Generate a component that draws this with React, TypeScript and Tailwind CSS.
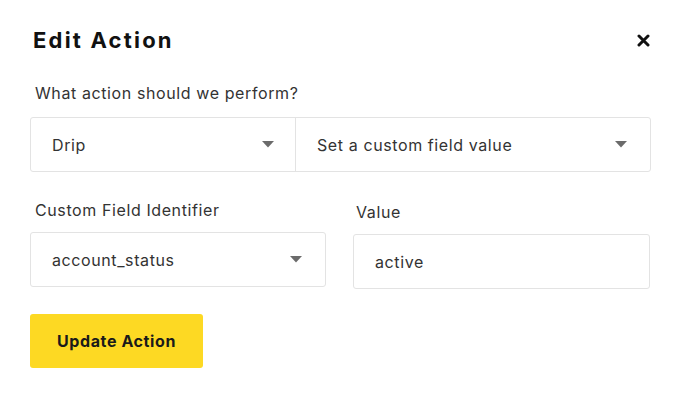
import React from "react";

function Caret() {
  return (
    <svg width="12" height="7" viewBox="0 0 12 7" className="shrink-0">
      <path d="M0 0 L12 0 L6 6.5 Z" fill="#6b6b6b" />
    </svg>
  );
}

export default function App() {
  return (
    <div
      className="w-[682px] h-[395px] bg-white text-[#2b2b2b] relative"
      style={{ fontFamily: "Inter, 'Open Sans', sans-serif" }}
    >
      <div className="pl-[30px] pr-[31px] pt-[26px]">
        <div className="flex items-center justify-between">
          <h1 className="text-[22px] leading-[28px] font-bold text-[#111] tracking-[2.2px] pl-[3px]">Edit Action</h1>
          <svg width="13" height="13" viewBox="0 0 13 13" className="mr-[1px] mt-[1px]">
            <path d="M2 2 L11 11 M11 2 L2 11" stroke="#111" strokeWidth="3" strokeLinecap="round" />
          </svg>
        </div>

        <div className="mt-[29px] pl-[5px] text-[16px] leading-[20px] tracking-[0.6px] text-[#333]">What action should we perform?</div>

        <div className="mt-[14px] flex h-[55px] border border-[#e3e3e3] rounded-[3px]">
          <div className="w-[265px] flex items-center justify-between pl-[21px] pr-[21px] border-r border-[#e3e3e3] text-[16px] tracking-[0.6px] text-[#333]">
            <span>Drip</span>
            <Caret />
          </div>
          <div className="flex-1 flex items-center justify-between pl-[21px] pr-[23px] text-[16px] tracking-[0.6px] text-[#333]">
            <span>Set a custom field value</span>
            <Caret />
          </div>
        </div>

        <div className="mt-[28px] grid grid-cols-[296px_297px] gap-x-[27px]">
          <div>
            <div className="pl-[5px] text-[16px] leading-[20px] tracking-[0.6px] text-[#333]">Custom Field Identifier</div>
            <div className="mt-[12px] h-[55px] border border-[#e3e3e3] rounded-[3px] flex items-center justify-between pl-[21px] pr-[23px] text-[16px] tracking-[0.6px] text-[#333]">
              <span>account_status</span>
              <Caret />
            </div>
          </div>
          <div className="mt-[2px]">
            <div className="pl-[3px] text-[16px] leading-[20px] tracking-[0.6px] text-[#333]">Value</div>
            <div className="mt-[12px] h-[55px] border border-[#e3e3e3] rounded-[3px] flex items-center pl-[21px] text-[16px] tracking-[0.6px] text-[#333]">
              active
            </div>
          </div>
        </div>

        <button className="mt-[25px] w-[173px] h-[54px] bg-[#fdd923] rounded-[3px] text-[16px] tracking-[0.6px] font-bold text-[#1a1a1a] flex items-center justify-center">
          Update Action
        </button>
      </div>
    </div>
  );
}
